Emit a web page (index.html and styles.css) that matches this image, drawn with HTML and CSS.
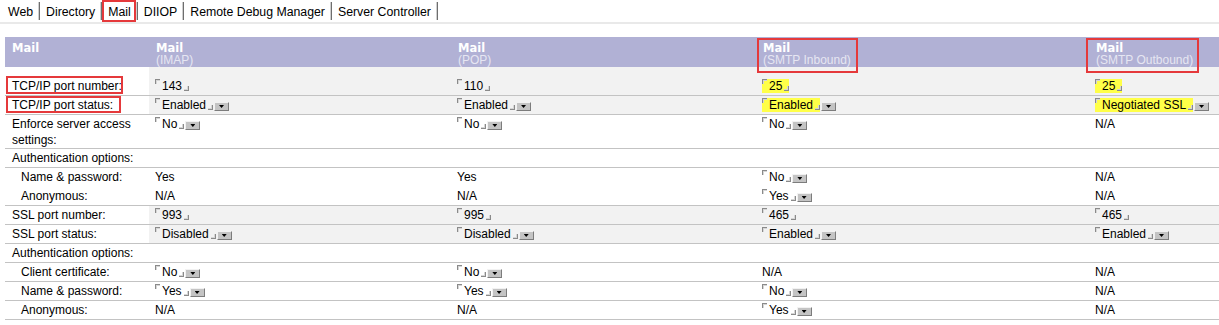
FILE: index.html
```html
<!DOCTYPE html>
<html>
<head>
<meta charset="utf-8">
<link rel="stylesheet" href="styles.css">
</head>
<body>
<div class="tabs">
  <span class="tab">Web</span>
  <span class="tab">Directory</span>
  <span class="tab active">Mail</span>
  <span class="tab">DIIOP</span>
  <span class="tab">Remote Debug Manager</span>
  <span class="tab">Server Controller</span>
</div>

<table class="grid">
  <colgroup>
    <col class="c-label"><col class="c-imap"><col class="c-pop"><col class="c-in"><col class="c-out">
  </colgroup>
  <tr class="hdr">
    <th><div class="h">Mail</div></th>
    <th><div class="h">Mail</div><div class="s">(IMAP)</div></th>
    <th><div class="h">Mail</div><div class="s">(POP)</div></th>
    <th><div class="ann-h ann-in"><div class="h">Mail</div><div class="s">(SMTP Inbound)</div></div></th>
    <th><div class="ann-h ann-out"><div class="h">Mail</div><div class="s">(SMTP Outbound)</div></div></th>
  </tr>
  <tr class="gray first">
    <td class="lbl"><span class="ann-l w1">TCP/IP port number:</span></td>
    <td><span class="fld"><i class="ml"></i>143<i class="mr"></i></span></td>
    <td><span class="fld"><i class="ml"></i>110<i class="mr"></i></span></td>
    <td><span class="fld hl"><i class="ml"></i>25<i class="mr"></i></span></td>
    <td><span class="fld hl"><i class="ml"></i>25<i class="mr"></i></span></td>
  </tr>
  <tr class="gray">
    <td class="lbl"><span class="ann-l w2">TCP/IP port status:</span></td>
    <td><span class="fld"><i class="ml"></i>Enabled<i class="mr"></i></span><i class="dd"></i></td>
    <td><span class="fld"><i class="ml"></i>Enabled<i class="mr"></i></span><i class="dd"></i></td>
    <td><span class="fld hl"><i class="ml"></i>Enabled<i class="mr"></i></span><i class="dd"></i></td>
    <td><span class="fld hl"><i class="ml"></i>Negotiated SSL<i class="mr"></i></span><i class="dd"></i></td>
  </tr>
  <tr class="tall">
    <td class="lbl">Enforce server access settings:</td>
    <td><span class="fld"><i class="ml"></i>No<i class="mr"></i></span><i class="dd"></i></td>
    <td><span class="fld"><i class="ml"></i>No<i class="mr"></i></span><i class="dd"></i></td>
    <td><span class="fld"><i class="ml"></i>No<i class="mr"></i></span><i class="dd"></i></td>
    <td>N/A</td>
  </tr>
  <tr>
    <td class="lbl">Authentication options:</td>
    <td></td><td></td><td></td><td></td>
  </tr>
  <tr class="noline">
    <td class="lbl sub">Name &amp; password:</td>
    <td>Yes</td>
    <td>Yes</td>
    <td><span class="fld"><i class="ml"></i>No<i class="mr"></i></span><i class="dd"></i></td>
    <td>N/A</td>
  </tr>
  <tr>
    <td class="lbl sub">Anonymous:</td>
    <td>N/A</td>
    <td>N/A</td>
    <td><span class="fld"><i class="ml"></i>Yes<i class="mr"></i></span><i class="dd"></i></td>
    <td>N/A</td>
  </tr>
  <tr class="gray">
    <td class="lbl">SSL port number:</td>
    <td><span class="fld"><i class="ml"></i>993<i class="mr"></i></span></td>
    <td><span class="fld"><i class="ml"></i>995<i class="mr"></i></span></td>
    <td><span class="fld"><i class="ml"></i>465<i class="mr"></i></span></td>
    <td><span class="fld"><i class="ml"></i>465<i class="mr"></i></span></td>
  </tr>
  <tr class="gray">
    <td class="lbl">SSL port status:</td>
    <td><span class="fld"><i class="ml"></i>Disabled<i class="mr"></i></span><i class="dd"></i></td>
    <td><span class="fld"><i class="ml"></i>Disabled<i class="mr"></i></span><i class="dd"></i></td>
    <td><span class="fld"><i class="ml"></i>Enabled<i class="mr"></i></span><i class="dd"></i></td>
    <td><span class="fld"><i class="ml"></i>Enabled<i class="mr"></i></span><i class="dd"></i></td>
  </tr>
  <tr>
    <td class="lbl">Authentication options:</td>
    <td></td><td></td><td></td><td></td>
  </tr>
  <tr>
    <td class="lbl sub">Client certificate:</td>
    <td><span class="fld"><i class="ml"></i>No<i class="mr"></i></span><i class="dd"></i></td>
    <td><span class="fld"><i class="ml"></i>No<i class="mr"></i></span><i class="dd"></i></td>
    <td>N/A</td>
    <td>N/A</td>
  </tr>
  <tr>
    <td class="lbl sub">Name &amp; password:</td>
    <td><span class="fld"><i class="ml"></i>Yes<i class="mr"></i></span><i class="dd"></i></td>
    <td><span class="fld"><i class="ml"></i>Yes<i class="mr"></i></span><i class="dd"></i></td>
    <td><span class="fld"><i class="ml"></i>No<i class="mr"></i></span><i class="dd"></i></td>
    <td>N/A</td>
  </tr>
  <tr>
    <td class="lbl sub">Anonymous:</td>
    <td>N/A</td>
    <td>N/A</td>
    <td><span class="fld"><i class="ml"></i>Yes<i class="mr"></i></span><i class="dd"></i></td>
    <td>N/A</td>
  </tr>
</table>
</body>
</html>
```

FILE: styles.css
```css
html, body {
  margin: 0;
  padding: 0;
  background: #fff;
}
body {
  font-family: "Liberation Sans", Arial, sans-serif;
  font-size: 12px;
  color: #000;
}

/* ---------- tabs ---------- */
.tabs {
  display: flex;
  padding: 0 0 2px 2px;
  border-bottom: 2px solid #e9e9e9;
}
.tab {
  position: relative;
  margin-top: 2px;
  padding: 2px 6px 0 6px;
  font-size: 12.3px;
  line-height: 16px;
  height: 16px;
  border-right: 1px solid #6e6e6e;
  box-shadow: inset -1px 0 0 #cfcfcf;
}
.tab.active::after {
  content: "";
  position: absolute;
  left: 0;
  right: 1px;
  top: -2px;
  bottom: -2px;
  border: 2px solid #e5393b;
}

/* ---------- grid ---------- */
.grid {
  margin: 13px 0 0 5px;
  width: 1214px;
  border-collapse: collapse;
  table-layout: fixed;
}
.c-label { width: 144px; }
.c-imap { width: 302px; }
.c-pop { width: 305px; }
.c-in { width: 333px; }
.c-out { width: 130px; }

.hdr th {
  background: #b1b1d5;
  text-align: left;
  vertical-align: top;
  padding: 5px 7px 0 7px;
  height: 25px;
}
.h {
  font-family: "DejaVu Sans", Verdana, sans-serif;
  font-weight: bold;
  font-size: 11.5px;
  line-height: 12px;
  color: #fff;
}
.s {
  font-size: 12px;
  line-height: 13px;
  color: #e6e6f2;
  font-weight: normal;
  white-space: nowrap;
}
.ann-h {
  position: relative;
}
.ann-h::after {
  content: "";
  position: absolute;
  top: -4px;
  bottom: -6px;
  border: 2px solid #e5393b;
}
.ann-in::after { left: -6px; width: 101px; box-sizing: border-box; }
.ann-out::after { left: -10px; width: 113px; box-sizing: border-box; }

td {
  padding: 1px 4px 1px 6px;
  line-height: 16px;
  vertical-align: top;
  border-bottom: 1px solid #c3c3c3;
  white-space: nowrap;
}
td.lbl {
  padding-left: 7px;
  white-space: normal;
}
td.sub {
  padding-left: 16px;
}
tr.first td { padding-top: 11px; }
tr.tall td { padding-bottom: 0; }
tr.noline td { border-bottom-color: #fff; }
tr.gray td { background: #f2f2f2; }
tr.gray td.lbl { background: #fff; }

.ann-l {
  display: inline-block;
  position: relative;
}
.ann-l::after {
  content: "";
  position: absolute;
  left: -6px;
  box-sizing: border-box;
  border: 2px solid #e5393b;
}
.ann-l.w1::after { top: -2px; bottom: 0; width: 117px; }
.ann-l.w2::after { top: -1px; bottom: 0; width: 115px; }

/* field markers */
.fld.hl { background: #ffff48; }
.ml, .mr, .dd { font-style: normal; }
.ml {
  display: inline-block;
  width: 4px;
  height: 4px;
  border-top: 1px solid #8a8a8a;
  border-left: 1px solid #8a8a8a;
  box-shadow: inset 1px 1px 0 #d6d6d6;
  vertical-align: top;
  margin: 1px 2px 0 0;
}
.mr {
  display: inline-block;
  width: 4px;
  height: 4px;
  border-right: 1px solid #8a8a8a;
  border-bottom: 1px solid #8a8a8a;
  box-shadow: inset -1px -1px 0 #d6d6d6;
  vertical-align: -1px;
  margin-left: 2px;
}
.dd {
  display: inline-block;
  position: relative;
  width: 13px;
  height: 7px;
  background: #c4c4c4;
  border: 1px solid;
  border-color: #f2f2f2 #7c7c7c #7c7c7c #f2f2f2;
  margin-left: 1px;
  vertical-align: -2px;
}
.dd::after {
  content: "";
  position: absolute;
  left: 4px;
  top: 2px;
  width: 5px;
  height: 3px;
  background: #000;
  clip-path: polygon(0 0, 100% 0, 50% 100%);
}
```
